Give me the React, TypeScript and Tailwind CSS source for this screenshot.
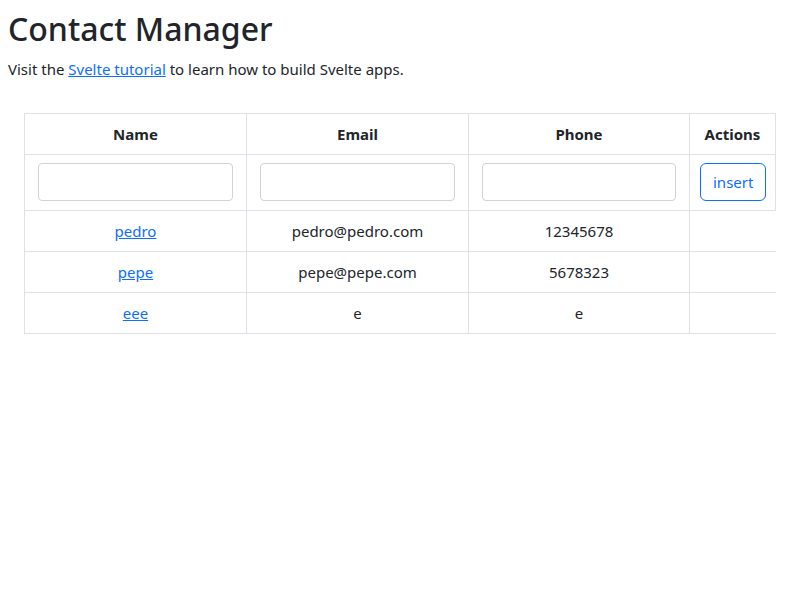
import React from 'react';

const contacts = [
  { name: 'pedro', email: 'pedro@pedro.com', phone: '12345678' },
  { name: 'pepe', email: 'pepe@pepe.com', phone: '5678323' },
  { name: 'eee', email: 'e', phone: 'e' },
];

const App = () => {
  return (
    <div className="min-h-screen bg-white p-2 text-[#212529] font-['Noto_Sans',sans-serif] text-[15px] leading-6">
      <h1 className="text-[32px] leading-[41px] font-medium mb-2">Contact Manager</h1>
      <p className="mb-4">
        Visit the <a href="#" className="text-[#0d6efd] underline">Svelte tutorial</a> to learn how to build Svelte apps.
      </p>

      {/* contacts table */}
      <div className="px-4 pt-4">
        <table className="w-[751px] table-fixed border-collapse text-center">
          <colgroup>
            <col className="w-[222px]" />
            <col className="w-[222px]" />
            <col className="w-[221px]" />
            <col className="w-[86px]" />
          </colgroup>
          <thead>
            <tr>
              <th className="border border-[#dee2e6] py-2 font-bold">Name</th>
              <th className="border border-[#dee2e6] py-2 font-bold">Email</th>
              <th className="border border-[#dee2e6] py-2 font-bold">Phone</th>
              <th className="border border-[#dee2e6] py-2 font-bold">Actions</th>
            </tr>
          </thead>
          <tbody>
            <tr>
              <td className="border border-[#dee2e6] px-[13px] pt-2 pb-[9px]">
                <input className="block w-full h-[38px] border border-[#ced4da] rounded px-3" />
              </td>
              <td className="border border-[#dee2e6] px-[13px] pt-2 pb-[9px]">
                <input className="block w-full h-[38px] border border-[#ced4da] rounded px-3" />
              </td>
              <td className="border border-[#dee2e6] px-[13px] pt-2 pb-[9px]">
                <input className="block w-full h-[38px] border border-[#ced4da] rounded px-3" />
              </td>
              <td className="border border-[#dee2e6] px-[10px] pt-2 pb-[9px]">
                <button className="h-[38px] px-3 border border-[#0d6efd] text-[#0d6efd] rounded-md">insert</button>
              </td>
            </tr>
            {contacts.map((c) => (
              <tr key={c.name}>
                <td className="border border-[#dee2e6] py-2">
                  <a href="#" className="text-[#0d6efd] underline">{c.name}</a>
                </td>
                <td className="border border-[#dee2e6] py-2">{c.email}</td>
                <td className="border border-[#dee2e6] py-2">{c.phone}</td>
                <td className="border-y border-l border-[#dee2e6] py-2"></td>
              </tr>
            ))}
          </tbody>
        </table>
      </div>
    </div>
  );
};

export default App;
